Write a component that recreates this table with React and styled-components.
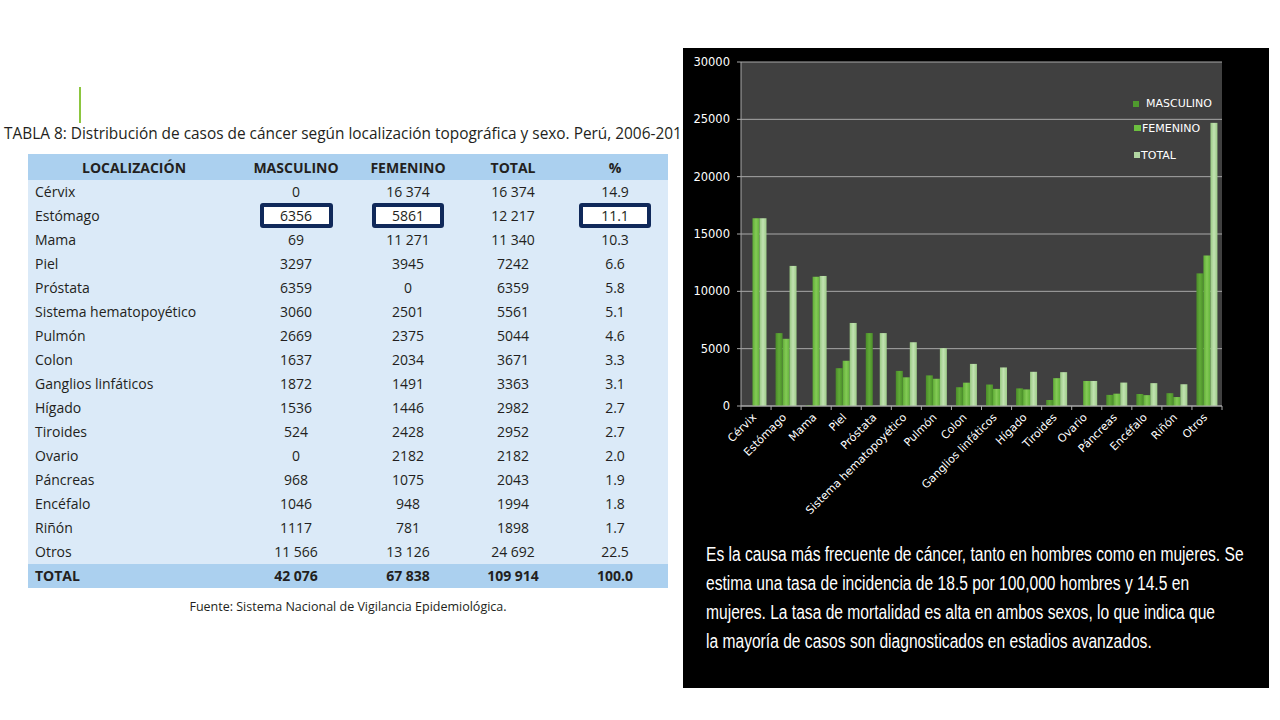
import React from 'react';
import styled, { createGlobalStyle } from 'styled-components';

const GlobalStyle = createGlobalStyle`
  html, body { margin: 0; padding: 0; background: #ffffff; }
  #root { width: 1280px; height: 720px; overflow: hidden; }
`;

const rows = [
  ['Cérvix', '0', '16 374', '16 374', '14.9'],
  ['Estómago', '6356', '5861', '12 217', '11.1'],
  ['Mama', '69', '11 271', '11 340', '10.3'],
  ['Piel', '3297', '3945', '7242', '6.6'],
  ['Próstata', '6359', '0', '6359', '5.8'],
  ['Sistema hematopoyético', '3060', '2501', '5561', '5.1'],
  ['Pulmón', '2669', '2375', '5044', '4.6'],
  ['Colon', '1637', '2034', '3671', '3.3'],
  ['Ganglios linfáticos', '1872', '1491', '3363', '3.1'],
  ['Hígado', '1536', '1446', '2982', '2.7'],
  ['Tiroides', '524', '2428', '2952', '2.7'],
  ['Ovario', '0', '2182', '2182', '2.0'],
  ['Páncreas', '968', '1075', '2043', '1.9'],
  ['Encéfalo', '1046', '948', '1994', '1.8'],
  ['Riñón', '1117', '781', '1898', '1.7'],
  ['Otros', '11 566', '13 126', '24 692', '22.5'],
];

const chartData = [
  ['Cérvix', 0, 16374, 16374],
  ['Estómago', 6356, 5861, 12217],
  ['Mama', 69, 11271, 11340],
  ['Piel', 3297, 3945, 7242],
  ['Próstata', 6359, 0, 6359],
  ['Sistema hematopoyético', 3060, 2501, 5561],
  ['Pulmón', 2669, 2375, 5044],
  ['Colon', 1637, 2034, 3671],
  ['Ganglios linfáticos', 1872, 1491, 3363],
  ['Hígado', 1536, 1446, 2982],
  ['Tiroides', 524, 2428, 2952],
  ['Ovario', 0, 2182, 2182],
  ['Páncreas', 968, 1075, 2043],
  ['Encéfalo', 1046, 948, 1994],
  ['Riñón', 1117, 781, 1898],
  ['Otros', 11566, 13126, 24692],
];

const Page = styled.div`
  display: flex;
  width: 1280px;
  height: 720px;
  background: #ffffff;
`;

const LeftCol = styled.div`
  width: 683px;
  flex-shrink: 0;
  overflow: hidden;
  display: flex;
  flex-direction: column;
`;

const Accent = styled.div`
  width: 2px;
  height: 36px;
  margin: 87px 0 0 79px;
  background: #8cc63f;
`;

const Title = styled.div`
  padding-left: 4px;
  margin-top: 1px;
  white-space: nowrap;
  font-family: 'Open Sans', 'Liberation Sans', sans-serif;
  font-size: 15.4px;
  line-height: 20px;
  color: #231f20;
`;

const Table = styled.table`
  margin: 10px 0 0 28px;
  width: 640px;
  border-collapse: collapse;
  font-family: 'Open Sans', 'Liberation Sans', sans-serif;
  font-size: 14px;
  color: #231f20;
  background: #dbeaf8;
`;

const HeadRow = styled.tr`
  height: 26px;
  background: #abd0ef;
`;

const Row = styled.tr`
  height: 24px;
  background: ${p => (p.$total ? '#abd0ef' : '#dbeaf8')};
  font-weight: ${p => (p.$total ? 700 : 400)};
`;

const Th = styled.th`
  padding: 0;
  font-weight: 700;
  text-align: center;
  width: ${p => p.$w}px;
`;

const Td = styled.td`
  padding: 0 0 0 ${p => (p.$left ? 7 : 0)}px;
  height: 24px;
  text-align: ${p => (p.$left ? 'left' : 'center')};
  line-height: 24px;
`;

const Boxed = styled.span`
  display: inline-block;
  box-sizing: border-box;
  width: ${p => p.$w}px;
  height: 25px;
  margin: -1px 0 0;
  line-height: 17px;
  border: 4px solid #10295a;
  border-radius: 3px;
  background: #ffffff;
  vertical-align: top;
`;

const Source = styled.div`
  width: 640px;
  margin: 10px 0 0 28px;
  text-align: center;
  font-family: 'Open Sans', 'Liberation Sans', sans-serif;
  font-size: 12.5px;
  color: #231f20;
`;

const Panel = styled.div`
  width: 586px;
  height: 640px;
  margin-top: 48px;
  background: #000000;
  display: flex;
  flex-direction: column;
  overflow: hidden;
`;

const ChartSvg = styled.svg`
  display: block;
  font-family: 'DejaVu Sans', 'Liberation Sans', sans-serif;
`;

const Note = styled.p`
  margin: 12px 0 0 23px;
  font-family: 'Liberation Sans', sans-serif;
  font-size: 20px;
  line-height: 29px;
  color: #ffffff;
  white-space: nowrap;
  transform: scaleX(0.78);
  transform-origin: left top;
`;

const PX = 58;
const PW = 481;
const PY = 14;
const PH = 344;
const MAXV = 30000;
const slot = PW / 16;
const yOf = v => PY + PH - (v * PH) / MAXV;

function Chart() {
  const grid = [0, 5000, 10000, 15000, 20000, 25000, 30000];
  return (
    <ChartSvg width="586" height="480" viewBox="0 0 586 480">
      <defs>
        <linearGradient id="gm" x1="0" x2="1" y1="0" y2="0">
          <stop offset="0" stopColor="#4a8c28" />
          <stop offset="0.5" stopColor="#62ab38" />
          <stop offset="1" stopColor="#4b8f2a" />
        </linearGradient>
        <linearGradient id="gf" x1="0" x2="1" y1="0" y2="0">
          <stop offset="0" stopColor="#5fae36" />
          <stop offset="0.5" stopColor="#84ca56" />
          <stop offset="1" stopColor="#62b23a" />
        </linearGradient>
        <linearGradient id="gt" x1="0" x2="1" y1="0" y2="0">
          <stop offset="0" stopColor="#98c982" />
          <stop offset="0.5" stopColor="#c2e2b2" />
          <stop offset="1" stopColor="#9ccb87" />
        </linearGradient>
      </defs>
      <rect x={PX} y={PY} width={PW} height={PH} fill="#404040" />
      {grid.map(v => (
        <g key={v}>
          <line x1={PX - 4} x2={PX + PW} y1={yOf(v)} y2={yOf(v)} stroke="#a8a8a8" strokeWidth="1" />
          <text x={PX - 11} y={yOf(v) + 4} fill="#ffffff" fontSize="11.5" textAnchor="end">{v}</text>
        </g>
      ))}
      <line x1={PX} x2={PX} y1={PY} y2={PY + PH} stroke="#a8a8a8" />
      {chartData.map(([name, m, f, t], i) => {
        const x0 = PX + i * slot;
        const ax = x0 + slot / 2 + 1;
        const ay = PY + PH + 12;
        return (
          <g key={name}>
            <rect x={x0 + 4.5} y={yOf(m)} width="7" height={PY + PH - yOf(m)} fill="url(#gm)" />
            <rect x={x0 + 11.5} y={yOf(f)} width="7" height={PY + PH - yOf(f)} fill="url(#gf)" />
            <rect x={x0 + 18.5} y={yOf(t)} width="7" height={PY + PH - yOf(t)} fill="url(#gt)" />
            <line x1={x0} x2={x0} y1={PY + PH} y2={PY + PH + 4} stroke="#a8a8a8" />
            <text
              x={ax}
              y={ay}
              fill="#ffffff"
              fontSize="11"
              textAnchor="end"
              transform={`rotate(-45 ${ax} ${ay})`}
            >
              {name}
            </text>
          </g>
        );
      })}
      <line x1={PX + PW} x2={PX + PW} y1={PY + PH} y2={PY + PH + 4} stroke="#a8a8a8" />
      <line x1={PX} x2={PX + PW} y1={PY + PH} y2={PY + PH} stroke="#a8a8a8" />
      <rect x="450" y="53" width="6" height="6" fill="#4f9a2e" />
      <text x="463" y="59" fill="#ffffff" fontSize="11">MASCULINO</text>
      <rect x="451" y="77" width="7" height="6" fill="#6cbf3f" />
      <text x="459" y="84" fill="#ffffff" fontSize="11">FEMENINO</text>
      <rect x="451" y="104" width="6" height="6" fill="#b2d6a2" />
      <text x="458" y="111" fill="#ffffff" fontSize="11">TOTAL</text>
    </ChartSvg>
  );
}

const boxed = { '1-1': 73, '1-2': 72, '1-4': 72 };

export default function App() {
  return (
    <>
      <GlobalStyle />
      <Page>
        <LeftCol>
          <Accent />
          <Title>TABLA 8: Distribución de casos de cáncer según localización topográfica y sexo. Perú, 2006-2011</Title>
          <Table>
            <thead>
              <HeadRow>
                <Th $w={212}>LOCALIZACIÓN</Th>
                <Th $w={112}>MASCULINO</Th>
                <Th $w={112}>FEMENINO</Th>
                <Th $w={98}>TOTAL</Th>
                <Th $w={106}>%</Th>
              </HeadRow>
            </thead>
            <tbody>
              {rows.map((r, ri) => (
                <Row key={r[0]}>
                  {r.map((c, ci) => (
                    <Td key={ci} $left={ci === 0}>
                      {boxed[`${ri}-${ci}`] ? <Boxed $w={boxed[`${ri}-${ci}`]}>{c}</Boxed> : c}
                    </Td>
                  ))}
                </Row>
              ))}
              <Row $total>
                <Td $left>TOTAL</Td>
                <Td>42 076</Td>
                <Td>67 838</Td>
                <Td>109 914</Td>
                <Td>100.0</Td>
              </Row>
            </tbody>
          </Table>
          <Source>Fuente: Sistema Nacional de Vigilancia Epidemiológica.</Source>
        </LeftCol>
        <Panel>
          <Chart />
          <Note>
            Es la causa más frecuente de cáncer, tanto en hombres como en mujeres. Se<br />
            estima una tasa de incidencia de 18.5 por 100,000 hombres y 14.5 en<br />
            mujeres. La tasa de mortalidad es alta en ambos sexos, lo que indica que<br />
            la mayoría de casos son diagnosticados en estadios avanzados.
          </Note>
        </Panel>
      </Page>
    </>
  );
}
